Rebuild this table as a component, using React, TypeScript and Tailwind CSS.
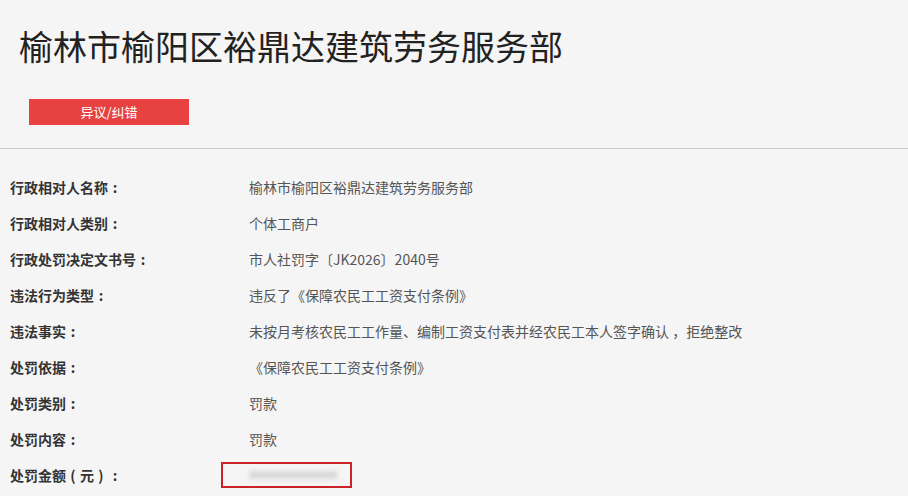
import React from "react";

const rows: [string, string][] = [
  ["行政相对人名称", "榆林市榆阳区裕鼎达建筑劳务服务部"],
  ["行政相对人类别", "个体工商户"],
  ["行政处罚决定文书号", "市人社罚字〔JK2026〕2040号"],
  ["违法行为类型", "违反了《保障农民工工资支付条例》"],
  ["违法事实", "未按月考核农民工工作量、编制工资支付表并经农民工本人签字确认 ，拒绝整改"],
  ["处罚依据", "《保障农民工工资支付条例》"],
  ["处罚类别", "罚款"],
  ["处罚内容", "罚款"],
];

function Colon() {
  return <span className="inline-block w-[14px] text-center">:</span>;
}

export default function App() {
  return (
    <div
      className="w-[908px] h-[496px] overflow-hidden bg-[#f5f5f5]"
      style={{ fontFamily: '"Microsoft YaHei", "Noto Sans CJK SC", sans-serif' }}
    >
      <div className="pt-[22px]">
        <div className="pl-[19px] h-[48px] text-[34px] leading-[48px] text-[#222]">
          榆林市榆阳区裕鼎达建筑劳务服务部
        </div>
      </div>
      <div className="pl-[29px] pt-[29px]">
        <div className="w-[160px] h-[26px] bg-[#e84142] text-white text-[13px] leading-[26px] text-center">
          异议/纠错
        </div>
      </div>
      <div className="mt-[23px] h-px bg-[#c8c8c8]" />
      <div className="pt-[20px]">
        {rows.map(([k, v]) => (
          <div key={k} className="flex h-[36px] items-center text-[14px]">
            <div className="w-[249px] pl-[10px] font-bold text-[#333]">
              {k}
              <Colon />
            </div>
            <div className="text-[#555]">{v}</div>
          </div>
        ))}
        <div className="flex h-[36px] items-center text-[14px]">
          <div className="w-[221px] pl-[10px] font-bold text-[#333]">
            处罚金额<span className="inline-block w-[14px] text-center">(</span>元<span className="inline-block w-[14px] text-center">)</span>
            <Colon />
          </div>
          <div className="w-[131px] h-[26px] border-2 border-[#cc2229] flex items-center pl-[26px]">
            <div className="w-[88px] h-[8px] bg-[#d8d8d8] blur-[2px]" />
          </div>
        </div>
      </div>
    </div>
  );
}
